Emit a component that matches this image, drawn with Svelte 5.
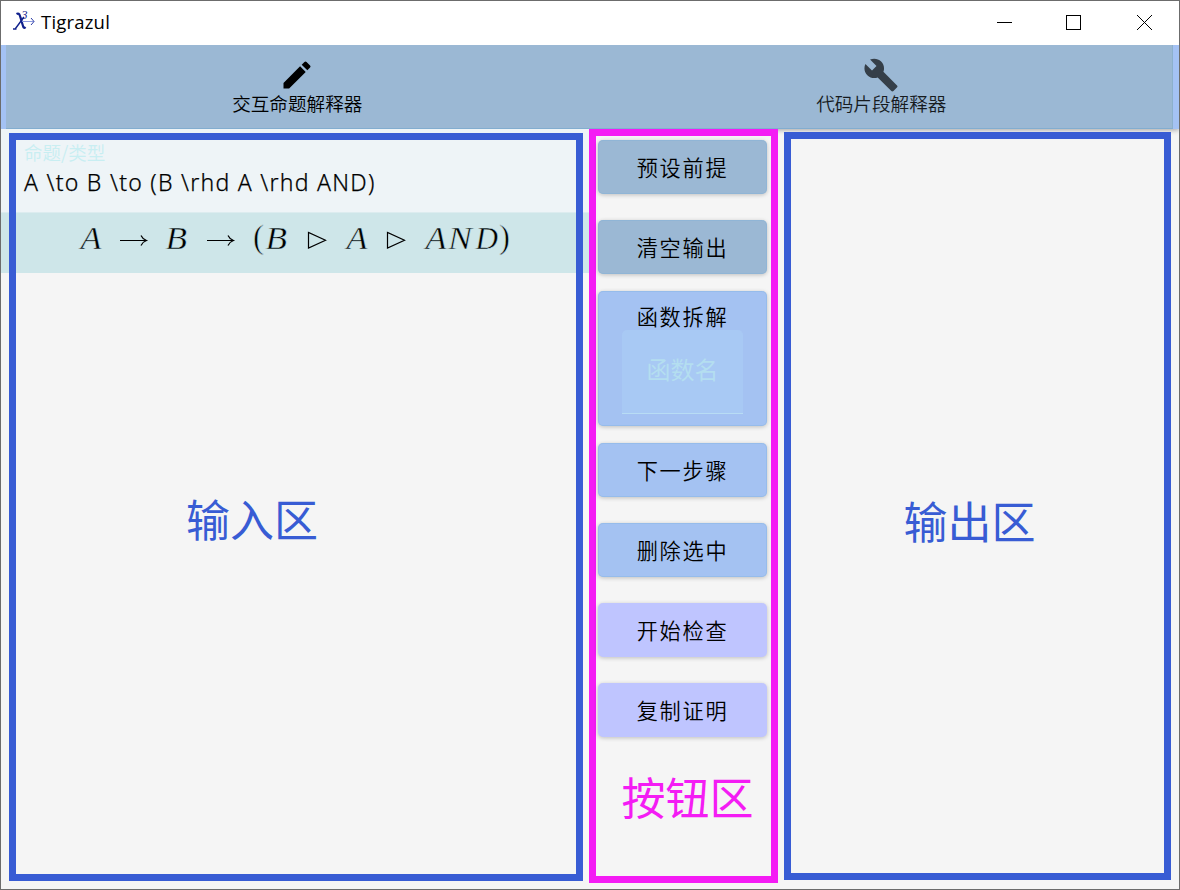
<script>
  const groups = [
    { label: '预设前提', tone: 'steel' },
    { label: '清空输出', tone: 'steel' },
    { label: '函数拆解', tone: 'sky', field: '函数名' },
    { label: '下一步骤', tone: 'sky' },
    { label: '删除选中', tone: 'sky' },
    { label: '开始检查', tone: 'violet' },
    { label: '复制证明', tone: 'violet' }
  ];
  const glyphs = [
    { t: 'A', x: 80.5, w: 21 },
    { t: 'B', x: 165.5, w: 21.5 },
    { t: 'B', x: 265.5, w: 21.5 },
    { t: 'A', x: 346.5, w: 21 },
    { t: 'A', x: 425.5, w: 21 },
    { t: 'N', x: 448, w: 24 },
    { t: 'D', x: 475.5, w: 22.5 }
  ];
</script>

<div class="window">
  <header class="titlebar">
    <svg class="logo" width="24" height="24" viewBox="0 0 24 24">
      <path d="M3.500 5Q6 3.500 7 7L10 17Q10.700 20 12.500 18" stroke="#10208c" stroke-width="2.200" fill="none" />
      <path d="M11 8L2.500 19.500M0 20H3.500" stroke="#10208c" stroke-width="1.400" fill="none" />
      <text x="8.500" y="10" font-size="12">3</text>
      <path d="M9 12.500H21" stroke="#8c9ae0" fill="none" />
      <path d="M18 9l3 3.500L18 16" stroke="#2c3ca4" fill="none" />
    </svg>
    <span class="title">Tigrazul</span>
    <div class="controls">
      <svg width="15" height="15" viewBox="0 0 15 15"><path d="M0 7.5H15" /></svg>
      <svg width="15" height="15" viewBox="0 0 15 15"><path d="M.5.5h14v14H.5z" /></svg>
      <svg width="15" height="15" viewBox="0 0 15 15"><path d="M0 0L15 15M15 0L0 15" /></svg>
    </div>
  </header>

  <nav class="tabs">
    <div class="tab active">
      <svg width="36" height="36" viewBox="0 0 24 24"><path d="M3 17.25V21h3.75L17.81 9.94l-3.75-3.75L3 17.25zM20.71 7.04a1 1 0 0 0 0-1.41l-2.34-2.34a1 1 0 0 0-1.41 0l-1.83 1.83 3.75 3.75 1.83-1.83z" /></svg>
      <span>交互命题解释器</span>
    </div>
    <div class="tab">
      <svg width="36" height="36" viewBox="0 0 24 24"><path d="M22.7 19l-9.1-9.1c.9-2.3.4-5-1.5-6.9-2-2-5-2.4-7.4-1.3L9 6 6 9 1.6 4.7C.4 7.1.9 10.1 2.9 12.1c1.9 1.9 4.6 2.4 6.9 1.5l9.1 9.1c.4.4 1 .4 1.4 0l2.3-2.3c.5-.4.5-1.1.1-1.4z" /></svg>
      <span>代码片段解释器</span>
    </div>
  </nav>

  <main>
    <section class="input">
      <div class="field">
        <label for="prop">命题/类型</label>
        <div class="value" id="prop">A \to B \to (B \rhd A \rhd AND)</div>
      </div>
      <svg class="formula" width="588" height="60" viewBox="1 213 588 60">
        {#each glyphs as g}
          <text x={g.x} y="248.500" textLength={g.w} lengthAdjust="spacingAndGlyphs" font-style="italic">{g.t}</text>
        {/each}
        <text class="paren" x="253" y="248" textLength="11" lengthAdjust="spacingAndGlyphs">(</text>
        <text class="paren" x="499" y="248" textLength="11" lengthAdjust="spacingAndGlyphs">)</text>
        <path d="M120 240.500H146M141 235.500Q142.500 239 146.500 240.500Q142.500 242 141 245.500M207 240.500H233M228 235.500Q229.500 239 233.500 240.500Q229.500 242 228 245.500" />
        <path d="M308.500 232.500V248L325.500 240.300ZM387.500 232.500V248L404.500 240.300Z" />
      </svg>
      <div class="name blue">输入区</div>
      <div class="frame"></div>
    </section>

    <section class="actions">
      {#each groups as g}
        <div class="btn {g.tone}" class:tall={g.field}>
          <span>{g.label}</span>
          {#if g.field}<div class="inner">{g.field}</div>{/if}
        </div>
      {/each}
      <div class="name pink">按钮区</div>
    </section>

    <section class="output">
      <div class="name blue">输出区</div>
    </section>
  </main>
</div>

<style>
  :global(body) { margin: 0; }
  * { box-sizing: border-box; }
  .window {
    width: 1180px; height: 890px; border: 1px solid #6c6c6c; background: #f5f5f5;
    display: flex; flex-direction: column; overflow: hidden;
    font-family: "Noto Sans", "Noto Sans CJK SC", sans-serif; color: #000;
  }
  .titlebar { height: 44px; background: #fff; display: flex; align-items: center; padding: 0 27px 2px 12px; flex: none; }
  .logo { fill: #10208c; font-family: "Liberation Serif", serif; font-style: italic; margin-top: -3px; overflow: visible; }
  .title { font: 18.5px "Open Sans", sans-serif; margin-left: 4px; letter-spacing: .2px; margin-top: -1px; }
  .controls { margin-left: auto; display: flex; gap: 55px; }
  .controls svg { fill: none; stroke: #000; stroke-width: 1; }
  .controls svg:nth-child(-n+2) { shape-rendering: crispEdges; }
  .controls svg:nth-child(2) { margin: 0 1px 0 -1px; }
  .tabs {
    height: 84px; flex: none; display: grid; grid-template-columns: 1fr 1fr; background: #9bb8d4;
    border: solid #a4c2f4; border-width: 0 6px 0 5px; box-shadow: 0 1px 5px rgba(0,0,0,.35), inset 0 -1px #82add0, inset -1px 0 #8cb0cc;
    position: relative; clip-path: inset(0 0 -10px 0);
  }
  .tab { display: flex; flex-direction: column; align-items: center; padding: 12px 1px 0 0; }
  .tab:not(.active) { padding-right: 0; }
  .tab svg { opacity: .65; flex: none; }
  .tab.active svg { opacity: 1; }
  .tab span { font: 350 18.6px/24px "Noto Sans CJK SC", sans-serif; margin-top: -2px; opacity: .85; }
  .tab.active span { opacity: 1; }
  main { flex: 1; min-height: 0; display: grid; grid-template-columns: 588px 189px 1fr; }
  .input { display: flex; flex-direction: column; position: relative; }
  .frame { position: absolute; z-index: 1; left: 8px; top: 4px; width: 574px; height: 748px; border: 7px solid #385cd4; }
  .field { height: 84px; background: #eef4f7; border-bottom: 1px solid #dcecef; padding: 10px 23px 0; flex: none; }
  .field label { display: block; font: 350 18.5px/26px "Noto Sans CJK SC", sans-serif; color: #c8eef2; }
  .value { font: 350 23px/34px "Noto Sans", sans-serif; white-space: pre; letter-spacing: 1.26px; -webkit-text-stroke: .25px #000; }
  .formula { display: block; flex: none; background: #cee6e9; font: 32px "Liberation Serif", serif; }
  .formula text { stroke: #cee6e9; stroke-width: .45px; }
  .formula path { fill: none; stroke: #000; stroke-width: 1.2; }
  .formula .paren { font-size: 34px; stroke-width: .6px; }
  .name { font: 44px/60px "Noto Sans CJK SC", sans-serif; text-align: center; }
  .blue { color: #385cd4; }
  .pink { color: #f41cf4; margin: 3px -10px 0 0; }
  .input .name { width: 502px; margin-top: 215px; }
  .actions { border: 7px solid #f41cf4; height: 754px; padding: 4px 4px 0 2px; display: flex; flex-direction: column; position: relative; z-index: 1; }
  .btn {
    height: 54px; flex: none; border-radius: 5px; margin-bottom: 26px; text-align: center;
    font: 350 21.2px/53px "Noto Sans CJK SC", sans-serif; letter-spacing: 1.7px;
    box-shadow: 0 1px 4px rgba(0,0,0,.22), inset 0 0 0 1px rgba(120,175,220,.3);
  }
  .btn:nth-child(2) { margin-bottom: 17px; }
  .steel { background: #9bb8d4; }
  .sky { background: #a4c2f2; }
  .violet { background: #bfc5ff; box-shadow: 0 1px 4px rgba(0,0,0,.22); }
  .tall { height: 135px; margin-bottom: 17px; padding-top: 11px; display: flex; flex-direction: column; align-items: center; line-height: 28px; }
  .inner {
    width: 121px; height: 84px; background: #a8c9f4; border-bottom: 1px solid #b8dcf4; border-radius: 5px 5px 0 0;
    color: #b4def0; font-size: 24px; font-weight: 400; line-height: 78px; letter-spacing: 0;
  }
  .output { margin: 3px 8px 0 6px; height: 748px; border: 7px solid #385cd4; padding-top: 351px; position: relative; z-index: 1; }
  .output .name { width: 357px; }
</style>
